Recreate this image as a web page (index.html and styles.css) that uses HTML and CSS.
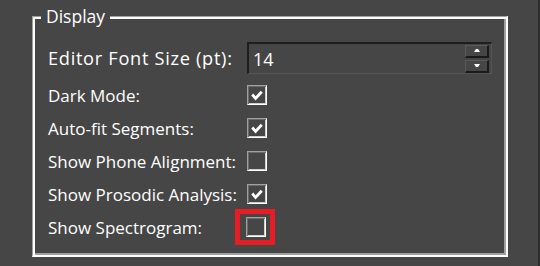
FILE: index.html
```html
<!DOCTYPE html>
<html>
<head>
<meta charset="utf-8">
<link rel="stylesheet" href="styles.css">
</head>
<body>
<div class="page">
  <div class="main">
    <fieldset class="group">
      <legend class="legend">Display</legend>
      <div class="rows">
        <div class="row row-spin">
          <span class="label label-big">Editor Font Size (pt):</span>
          <div class="spin">
            <span class="spin-value">14</span>
            <div class="spin-btns">
              <div class="spin-btn"><svg width="6" height="4" viewBox="0 0 6 4"><polygon points="2,0 4,0 6,3 0,3" fill="#fff"/></svg></div>
              <div class="spin-btn"><svg width="6" height="4" viewBox="0 0 6 4"><polygon points="0,0 6,0 4,3 2,3" fill="#fff"/></svg></div>
            </div>
          </div>
        </div>
        <div class="row">
          <span class="label">Dark Mode:</span>
          <span class="check"><svg width="19" height="19" viewBox="0 0 19 19"><polyline points="4.5,8.5 8,12.5 14.5,5.5" fill="none" stroke="#fff" stroke-width="3"/></svg></span>
        </div>
        <div class="row">
          <span class="label">Auto-fit Segments:</span>
          <span class="check"><svg width="19" height="19" viewBox="0 0 19 19"><polyline points="4.5,8.5 8,12.5 14.5,5.5" fill="none" stroke="#fff" stroke-width="3"/></svg></span>
        </div>
        <div class="row">
          <span class="label">Show Phone Alignment:</span>
          <span class="check"></span>
        </div>
        <div class="row">
          <span class="label">Show Prosodic Analysis:</span>
          <span class="check"><svg width="19" height="19" viewBox="0 0 19 19"><polyline points="4.5,8.5 8,12.5 14.5,5.5" fill="none" stroke="#fff" stroke-width="3"/></svg></span>
        </div>
        <div class="row">
          <span class="label">Show Spectrogram:</span>
          <span class="check-wrap"><span class="check"></span></span>
        </div>
      </div>
    </fieldset>
  </div>
  <div class="edge"></div>
</div>
</body>
</html>
```

FILE: styles.css
```css
html, body {
  margin: 0;
  padding: 0;
  background: #464646;
}
.page {
  display: flex;
  width: 540px;
  height: 266px;
  overflow: hidden;
  font-family: "Open Sans", "Noto Sans", sans-serif;
  color: #ffffff;
}
.main {
  flex: 1;
  padding: 4px 0 0 32px;
}
.edge {
  width: 2px;
  background: #2b2b2b;
}
.group {
  margin: 0;
  padding: 0;
  width: 476px;
  height: 253px;
  box-sizing: border-box;
  border-style: solid;
  border-width: 1px 2px 2px 1px;
  border-color: #a0a0a0 #ffffff #ffffff #a0a0a0;
  box-shadow: inset 2px 2px 0 #ffffff, inset -2px -2px 0 #a0a0a0;
}
.legend {
  margin-left: 8px;
  padding: 0 5px;
  font-size: 17.5px;
  line-height: 24px;
  background: #464646;
}
.rows {
  display: flex;
  flex-direction: column;
  gap: 13px;
  padding: 14px 0 0 15px;
}
.row {
  display: flex;
  align-items: center;
  height: 20px;
  font-size: 17px;
}
.row-spin {
  height: 32px;
  margin-bottom: -2px;
}
.label {
  width: 199px;
  white-space: nowrap;
}
.label-big {
  font-size: 18.2px;
  letter-spacing: 0.7px;
}
.spin {
  display: flex;
  align-items: center;
  width: 245px;
  height: 32px;
  box-sizing: border-box;
  border-style: solid;
  border-width: 2px 1px 1px 2px;
  border-color: #1e1e1e #555555 #555555 #1e1e1e;
  padding: 0 2px 0 4px;
}
.spin-value {
  flex: 1;
  font-size: 18px;
}
.spin-btns {
  display: flex;
  flex-direction: column;
  gap: 2px;
}
.spin-btn {
  display: flex;
  align-items: center;
  justify-content: center;
  width: 24px;
  height: 13px;
  box-sizing: border-box;
  border-style: solid;
  border-width: 1px 2px 2px 1px;
  border-color: #5a5a5a #1a1a1a #1a1a1a #5a5a5a;
}
.check {
  display: inline-flex;
  width: 20px;
  height: 20px;
  box-sizing: border-box;
  border-style: solid;
  border-width: 1px;
  border-color: #a0a0a0 #ffffff #ffffff #a0a0a0;
  box-shadow: inset 1px 1px 0 #6a6a6a, inset -1px -1px 0 #d0d0d0;
}
.check-wrap {
  display: inline-flex;
  margin-left: -12px;
  padding: 3px 4px 3px 6px;
  border: 5px solid #e81c24;
}
```
